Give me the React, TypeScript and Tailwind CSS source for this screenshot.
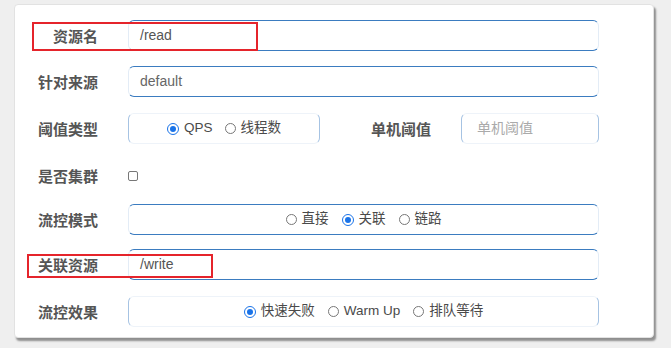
import React from 'react';

const cjk = { fontFamily: '"Liberation Sans", "Noto Sans CJK SC", sans-serif' };

const Radio: React.FC<{ checked?: boolean; label: string }> = ({ checked, label }) => (
  <span className="flex items-center gap-[5px]">
    {checked ? (
      <span className="flex h-[12px] w-[12px] items-center justify-center rounded-full border-[1.5px] border-[#1a73e8] bg-white">
        <span className="h-[6px] w-[6px] rounded-full bg-[#1a73e8]" />
      </span>
    ) : (
      <span className="h-[11px] w-[11px] rounded-full border border-[#777] bg-white" />
    )}
    <span className="text-[13.5px] text-[#4a4a4a]">{label}</span>
  </span>
);

const Label: React.FC<{ text: string }> = ({ text }) => (
  <div className="w-[83px] shrink-0 pt-[4px] text-right text-[15px] font-bold text-[#555]">
    {text}
  </div>
);

// rows where the box edges come out as lines top and bottom
const lineBox =
  'rounded-[6px] border border-y-[#3b7cc0] border-x-[#e3ecf6] bg-white';
// rows where only the corners show
const cornerBox =
  'rounded-[6px] border border-y-[#eef3f9] border-x-[#a6c3e3] bg-white';

const App: React.FC = () => {
  return (
    <div className="h-[348px] w-full bg-[#efefef] pl-[14px] pt-[4px]" style={cjk}>
      <div className="relative h-[334px] w-[640px] rounded-[4px] border border-[#e2e2e2] bg-white shadow-[2px_3px_2px_rgba(0,0,0,0.4)]">
        {/* 资源名 */}
        <div className="mt-[15px] flex h-[31px] items-center gap-[30px]">
          <Label text="资源名" />
          <div className={`flex h-full w-[471px] items-center pl-[11px] text-[14px] text-[#555] ${lineBox}`}>
            /read
          </div>
        </div>

        {/* 针对来源 */}
        <div className="mt-[15px] flex h-[31px] items-center gap-[30px]">
          <Label text="针对来源" />
          <div className={`flex h-full w-[471px] items-center pl-[11px] text-[14px] text-[#666] ${lineBox}`}>
            default
          </div>
        </div>

        {/* 阈值类型 / 单机阈值 */}
        <div className="mt-[16px] flex h-[31px] items-center gap-[30px]">
          <Label text="阈值类型" />
          <div className="flex h-full items-center">
            <div className={`flex h-full w-[192px] items-center justify-center gap-[12px] ${cornerBox}`}>
              <Radio checked label="QPS" />
              <Radio label="线程数" />
            </div>
            <div className="ml-[51px] w-[62px] pt-[4px] text-[15px] font-bold text-[#555]">单机阈值</div>
            <div className={`ml-[28px] flex h-full w-[138px] items-center pl-[15px] text-[14px] text-[#aaa] ${cornerBox}`}>
              单机阈值
            </div>
          </div>
        </div>

        {/* 是否集群 */}
        <div className="mt-[16px] flex h-[31px] items-center gap-[30px]">
          <Label text="是否集群" />
          <span className="h-[10px] w-[10px] rounded-[2px] border border-[#777] bg-white" />
        </div>

        {/* 流控模式 */}
        <div className="mt-[13px] flex h-[31px] items-center gap-[30px]">
          <Label text="流控模式" />
          <div className={`flex h-full w-[471px] items-center justify-center gap-[13px] ${lineBox}`}>
            <Radio label="直接" />
            <Radio checked label="关联" />
            <Radio label="链路" />
          </div>
        </div>

        {/* 关联资源 */}
        <div className="mt-[14px] flex h-[31px] items-center gap-[30px]">
          <Label text="关联资源" />
          <div className={`flex h-full w-[471px] items-center pl-[11px] text-[14px] text-[#555] ${lineBox}`}>
            /write
          </div>
        </div>

        {/* 流控效果 */}
        <div className="mt-[16px] flex h-[31px] items-center gap-[30px]">
          <Label text="流控效果" />
          <div className={`flex h-full w-[471px] items-center justify-center gap-[13px] ${cornerBox}`}>
            <Radio checked label="快速失败" />
            <Radio label="Warm Up" />
            <Radio label="排队等待" />
          </div>
        </div>

        {/* red annotation frames */}
        <div className="absolute left-[17px] top-[17px] h-[29px] w-[226px] border-2 border-[#e5242b]" />
        <div className="absolute left-[12px] top-[249px] h-[24px] w-[186px] border-2 border-[#e5242b]" />
      </div>
    </div>
  );
};

export default App;
